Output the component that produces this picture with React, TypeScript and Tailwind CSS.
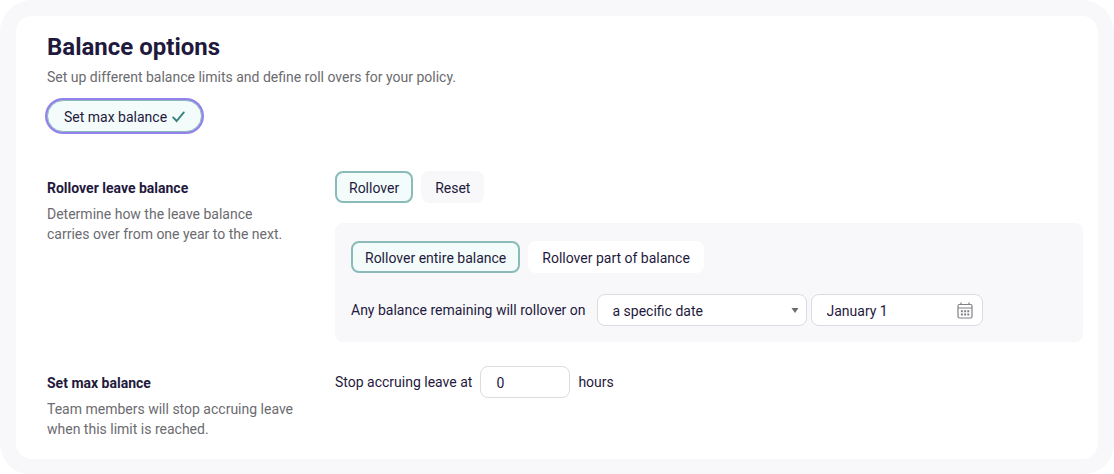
import { useState } from "react";
import type { ReactNode } from "react";

interface OptionButtonProps {
  selected: boolean;
  idleClass: string;
  onClick: () => void;
  children: ReactNode;
}

function OptionButton({ selected, idleClass, onClick, children }: OptionButtonProps) {
  return (
    <button
      type="button"
      aria-pressed={selected}
      onClick={onClick}
      className={`h-8 rounded-lg border-2 px-3 pt-0.5 cursor-pointer whitespace-nowrap ${
        selected ? "border-[#8abbb8] bg-[#f3fcfb]" : idleClass
      }`}
    >
      {children}
    </button>
  );
}

interface SettingRowProps {
  title: string;
  description: string;
  children: ReactNode;
}

function SettingRow({ title, description, children }: SettingRowProps) {
  return (
    <section className="flex gap-10">
      <div className="w-[248px] shrink-0 pt-[7px]">
        <h2 className="font-bold">{title}</h2>
        <p className="mt-1.5 text-[#6b6b70]">{description}</p>
      </div>
      <div className="min-w-0 flex-1">{children}</div>
    </section>
  );
}

function CalendarIcon() {
  return (
    <svg width="16" height="17" viewBox="0 0 16 17" fill="none" stroke="#808085" aria-hidden="true">
      <rect x="1" y="2.5" width="14" height="13.5" rx="1.5" strokeWidth="1.2" />
      <path d="M1 6h14M4 0.5v2.5M12 0.5v2.5" strokeWidth="1.2" />
      <path d="M3.9 9.2h8.4M3.9 12.4h8.4" strokeWidth="2" strokeDasharray="2 1.2" />
    </svg>
  );
}

export default function App() {
  const [hasMax, setHasMax] = useState(true);
  const [mode, setMode] = useState("rollover");
  const [scope, setScope] = useState("entire");
  const [when, setWhen] = useState("date");
  const [date, setDate] = useState("January 1");
  const [maxHours, setMaxHours] = useState("0");

  const fieldClass = "h-8 rounded-lg border border-[#dcdce0] bg-white pt-0.5 outline-none";

  return (
    <div className="rounded-[32px] bg-[#f8f8fb] p-4 font-[Roboto,sans-serif] text-sm leading-5 text-[#1f1a3d]">
      <main className="rounded-2xl bg-white pt-[15px] pr-[15px] pb-5 pl-[31px]">
        <h1 className="text-2xl leading-8 font-bold">Balance options</h1>
        <p className="mt-1 text-[#6b6b70]">
          Set up different balance limits and define roll overs for your policy.
        </p>
        <button
          type="button"
          aria-pressed={hasMax}
          onClick={() => setHasMax(!hasMax)}
          className="mt-[13px] flex h-8 cursor-pointer items-center gap-1 rounded-full border border-[#8abbb8] bg-[#f3fcfb] px-4 pt-0.5 ring-2 ring-[#9381ee]"
        >
          Set max balance
          {hasMax && (
            <svg width="14" height="13" viewBox="0 0 14 13" fill="none" aria-hidden="true">
              <path d="M2.2 6.4l3.4 3.6L12.8 1.4" stroke="#37827d" strokeWidth="1.9" strokeLinecap="round" />
            </svg>
          )}
        </button>

        <div className="mt-[39px] flex flex-col gap-6">
          <SettingRow
            title="Rollover leave balance"
            description="Determine how the leave balance carries over from one year to the next."
          >
            <div className="flex gap-2">
              <OptionButton
                selected={mode === "rollover"}
                idleClass="border-[#f8f8fb] bg-[#f8f8fb]"
                onClick={() => setMode("rollover")}
              >
                Rollover
              </OptionButton>
              <OptionButton
                selected={mode === "reset"}
                idleClass="border-[#f8f8fb] bg-[#f8f8fb]"
                onClick={() => setMode("reset")}
              >
                Reset
              </OptionButton>
            </div>

            <div className="mt-5 rounded-lg bg-[#f8f8fb] px-4 pt-[18px] pb-4">
              <div className="flex gap-2">
                <OptionButton
                  selected={scope === "entire"}
                  idleClass="border-white bg-white"
                  onClick={() => setScope("entire")}
                >
                  Rollover entire balance
                </OptionButton>
                <OptionButton
                  selected={scope === "part"}
                  idleClass="border-white bg-white"
                  onClick={() => setScope("part")}
                >
                  Rollover part of balance
                </OptionButton>
              </div>

              <div className="mt-[21px] flex items-center">
                <label htmlFor="rollover-when" className="mr-[11px]">
                  Any balance remaining will rollover on
                </label>
                <div className="relative mr-1">
                  <select
                    id="rollover-when"
                    value={when}
                    onChange={(e) => setWhen(e.target.value)}
                    className={`${fieldClass} w-[210px] appearance-none pr-8 pl-[15px]`}
                  >
                    <option value="date">a specific date</option>
                    <option value="anniversary">work anniversary</option>
                  </select>
                  <svg
                    width="8"
                    height="5"
                    viewBox="0 0 8 5"
                    className="pointer-events-none absolute top-3.5 right-2"
                    aria-hidden="true"
                  >
                    <path d="M0.5 0h7L4 5z" fill="#6b6b70" />
                  </svg>
                </div>
                <div className="relative">
                  <input
                    type="text"
                    aria-label="Rollover date"
                    value={date}
                    onChange={(e) => setDate(e.target.value)}
                    className={`${fieldClass} w-[172px] pr-8 pl-[15px]`}
                  />
                  <span className="pointer-events-none absolute top-2 right-2.5">
                    <CalendarIcon />
                  </span>
                </div>
              </div>
            </div>
          </SettingRow>

          {hasMax && (
            <SettingRow
              title="Set max balance"
              description="Team members will stop accruing leave when this limit is reached."
            >
              <div className="flex items-center gap-2">
                <label htmlFor="max-hours">Stop accruing leave at</label>
                <input
                  id="max-hours"
                  type="text"
                  inputMode="numeric"
                  value={maxHours}
                  onChange={(e) => setMaxHours(e.target.value)}
                  className={`${fieldClass} w-[90px] px-[15px]`}
                />
                <span>hours</span>
              </div>
            </SettingRow>
          )}
        </div>
      </main>
    </div>
  );
}
